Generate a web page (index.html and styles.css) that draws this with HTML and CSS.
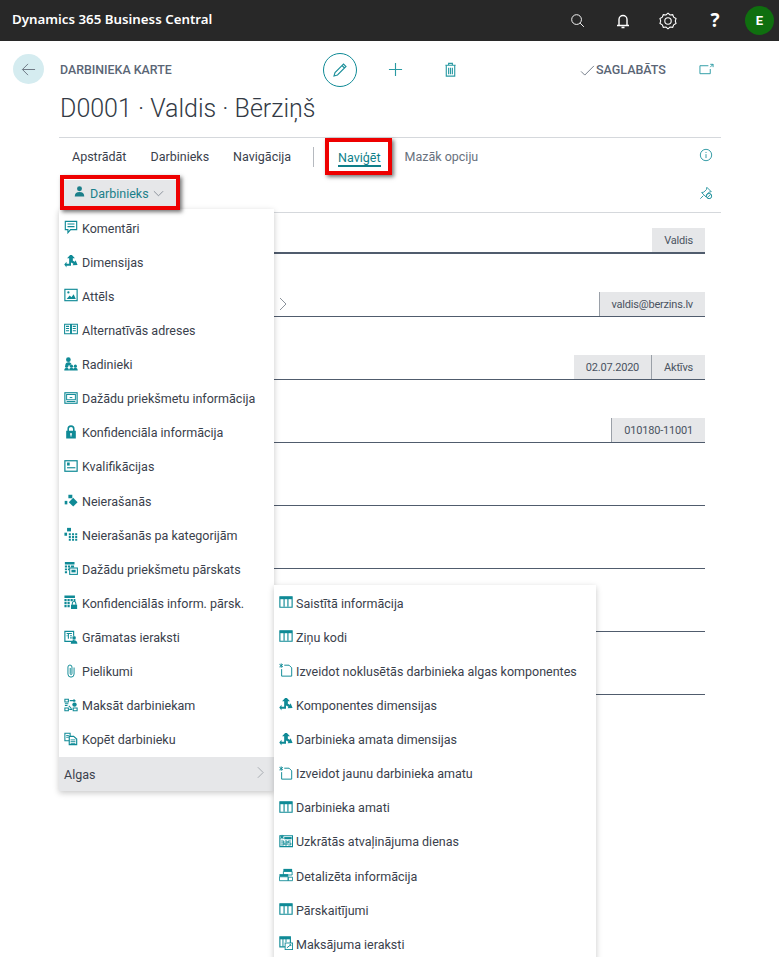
FILE: index.html
```html
<!DOCTYPE html>
<html lang="lv">
<head>
<meta charset="utf-8">
<title>Darbinieka karte</title>
<link rel="stylesheet" href="styles.css">
</head>
<body>
<svg class="sprite" xmlns="http://www.w3.org/2000/svg">
  <defs>
    <symbol id="i-comment" viewBox="0 0 16 16"><path d="M1.500 1.500h13v9.500H7.500l-3 3.500v-3.500h-3z" fill="none" stroke="currentColor" stroke-width="1.300"/><path d="M4 4.600h8M4 7.600h8" stroke="currentColor" stroke-width="1.300"/></symbol>
    <symbol id="i-dim" viewBox="0 0 16 16"><path d="M9 1l3.500 3.800h-2.400v2.800l2.300 1.300.9-1.700 2.200 5.300-5.700.3 1-1.800L8 9.600V13.500H2.800l.1 1.800-2.600-3.300 2.600-3.200v2.300h3V4.800H3.500L7 1z" fill="currentColor"/></symbol>
    <symbol id="i-image" viewBox="0 0 16 16"><rect x="1" y="1.500" width="14" height="13" fill="none" stroke="currentColor" stroke-width="1.300"/><path d="M3 12.500l3.500-4 2 2 2.500-3.500 2.500 5.500z" fill="currentColor"/><circle cx="5" cy="5" r="1.300" fill="currentColor"/></symbol>
    <symbol id="i-address" viewBox="0 0 16 16"><path d="M0.700 2.500h6.800v11H0.700zM8.500 2.500h6.800v11H8.500z" fill="none" stroke="currentColor" stroke-width="1.200"/><path d="M2.300 5h3.500M2.300 7.500h3.500M2.300 10h3.500M10 5h3.500M10 7.500h3.500M10 10h3.500" stroke="currentColor" stroke-width="1.200"/></symbol>
    <symbol id="i-people" viewBox="0 0 16 16"><circle cx="5" cy="3" r="2.700" fill="currentColor"/><path d="M1.500 9.500c0-2.500 1.500-3.500 3.500-3.500 1.500 0 3 .5 3.500 2L6 10z" fill="currentColor"/><circle cx="3" cy="10.500" r="1.800" fill="currentColor"/><circle cx="8.500" cy="10.500" r="1.800" fill="currentColor"/><circle cx="13" cy="10.500" r="1.800" fill="currentColor"/><path d="M0.300 15.500c0-2.400 1-3.300 2.700-3.300s2.700.9 2.700 3.300zM5.800 15.500c0-2.400 1-3.300 2.700-3.300s2.700.9 2.700 3.300zM10.300 15.500c0-2.400 1-3.300 2.700-3.300s2.700.9 2.700 3.300z" fill="currentColor"/></symbol>
    <symbol id="i-box" viewBox="0 0 16 16"><rect x="1" y="2" width="14" height="12" fill="none" stroke="currentColor" stroke-width="1.300"/><rect x="3" y="4" width="10" height="6" fill="none" stroke="currentColor" stroke-width="1.100"/><path d="M6.500 7.500h3M3 12h10" stroke="currentColor" stroke-width="1.100"/></symbol>
    <symbol id="i-lock" viewBox="0 0 16 16"><path d="M4.800 7V4.500a3.200 3.200 0 0 1 6.400 0V7" fill="none" stroke="currentColor" stroke-width="1.800"/><path fill-rule="evenodd" d="M2.500 6.500h11V15.500h-11zM8 9a1.200 1.200 0 0 0-.6 2.200V13h1.200v-1.800A1.200 1.200 0 0 0 8 9z" fill="currentColor"/></symbol>
    <symbol id="i-qual" viewBox="0 0 16 16"><rect x="1" y="2" width="14" height="12" fill="none" stroke="currentColor" stroke-width="1.400"/><rect x="3.500" y="4" width="3" height="3.500" fill="currentColor"/><path d="M3.500 10H13" stroke="currentColor" stroke-width="1.300"/></symbol>
    <symbol id="i-absence" viewBox="0 0 16 16"><path d="M10.500 5.500l5 5-5 5-5-5z" fill="currentColor"/><rect x="5" y="2" width="4.500" height="4" fill="currentColor"/><rect x="0.800" y="9" width="3" height="4" fill="currentColor"/></symbol>
    <symbol id="i-abscat" viewBox="0 0 16 16"><rect x="3.500" y="1" width="4.500" height="4" fill="currentColor"/><rect x="0.500" y="6.500" width="3" height="3.500" fill="currentColor"/><path d="M5.500 7h2.300v2.400H5.500zM9.200 7h2.300v2.400H9.200zM12.800 7h2.300v2.400h-2.300zM5.500 10.200h2.300v2.400H5.500zM9.200 10.200h2.300v2.400H9.200zM12.800 10.200h2.300v2.400h-2.300zM5.500 13.300h2.300v2.400H5.500zM9.200 13.300h2.300v2.400H9.200zM12.800 13.300h2.300v2.400h-2.300z" fill="currentColor"/></symbol>
    <symbol id="i-report" viewBox="0 0 16 16"><path d="M1 1h11v3H1zM1 5.200h2.500v2.200H1zM4.500 5.200H7v2.200H4.500zM8 5.200h3.500v2.200H8zM1 8.500h2.500v2.200H1zM1 11.700h2.500v2.200H1zM4.500 8.500H6v2.200H4.500z" fill="currentColor"/><rect x="6.500" y="8" width="8.800" height="7.300" fill="#fff" stroke="currentColor" stroke-width="1.200"/><rect x="8.500" y="10" width="4.800" height="3" fill="currentColor"/></symbol>
    <symbol id="i-confrep" viewBox="0 0 16 16"><path d="M0.500 0.500h12v3h-12zM0.500 4.500h2.500v2.500H0.500zM4 4.500h2.500v2.500H4zM7.500 4.500H10v2.500H7.500zM11 4.500h2v2.500h-2zM0.500 8h2.500v2.500H0.500zM4 8h2.500v2.500H4zM0.500 11.500h2.500V14H0.500zM4 11.500h2.500V14H4z" fill="currentColor"/><path d="M9.500 11V9.500a2 2 0 0 1 4 0V11" fill="none" stroke="currentColor" stroke-width="1.200"/><rect x="8" y="11" width="7" height="5" fill="currentColor"/></symbol>
    <symbol id="i-ledger" viewBox="0 0 16 16"><path d="M1 1.500h10v11.500H1z" fill="none" stroke="currentColor" stroke-width="1.300"/><path d="M3 4h6M5 4v6M3 6.500h1M7 6.500h2M7 9h2" stroke="currentColor" stroke-width="1.200"/><circle cx="11.500" cy="9" r="2.300" fill="currentColor" stroke="#fff" stroke-width=".5"/><path d="M7.700 15.800c0-2.600 1.500-4 3.800-4s3.800 1.400 3.800 4z" fill="currentColor"/></symbol>
    <symbol id="i-clip" viewBox="0 0 16 16"><path d="M11.500 4.500v7a3.500 3.500 0 0 1-7 0v-8a2.300 2.300 0 0 1 4.600 0v7.500a1 1 0 0 1-2 0V5" fill="none" stroke="currentColor" stroke-width="1.100" stroke-linecap="round"/></symbol>
    <symbol id="i-pay" viewBox="0 0 16 16"><path d="M1 1.500h4v3H1zM1 6.500h4M1 8.500h3M1 11.500h4v3H1zM10.500 11.500h4.500v3h-4.500z" fill="none" stroke="currentColor" stroke-width="1.200"/><circle cx="12" cy="7.500" r="2.500" fill="currentColor"/><path d="M6.500 3h6l-1.500-1.500M12.500 3L11 4.500M5.500 9l3 3M6 13h3.500" fill="none" stroke="currentColor" stroke-width="1.200"/></symbol>
    <symbol id="i-copy" viewBox="0 0 16 16"><path d="M1 1.500h6v8.500H1z" fill="none" stroke="currentColor" stroke-width="1.200"/><path d="M2.500 4h3M2.500 6h3" stroke="currentColor"/><path d="M6 5h5l3.500 3v6.500H6z" fill="#fff" stroke="currentColor" stroke-width="1.300"/><path d="M7.500 9H13M7.500 11H13M7.500 13H13" stroke="currentColor"/></symbol>
    <symbol id="i-table" viewBox="0 0 16 16"><path d="M1 2h14v12H1z" fill="none" stroke="currentColor" stroke-width="1.300"/><path d="M1 2h14v2.800H1z" fill="currentColor"/><path d="M5.800 3v10.500M10.200 3v10.500" stroke="currentColor" stroke-width="1.300"/></symbol>
    <symbol id="i-new" viewBox="0 0 16 16"><path d="M6 2.500h5.500l3 3V15H3V7" fill="none" stroke="currentColor" stroke-width="1.100"/><path d="M2.500 0.500v5M0.500 1.500l4 3M4.500 1.500l-4 3" stroke="currentColor" stroke-width="1.100"/></symbol>
    <symbol id="i-accrue" viewBox="0 0 16 16"><path d="M1 2h14.500v12.500H1z" fill="none" stroke="currentColor" stroke-width="1.300"/><path d="M6 3.500h8.500V6H6z" fill="currentColor"/><path d="M3.500 1v5M1.500 2l4 3M5.500 2l-4 3" stroke="currentColor" stroke-width="1.100"/><path d="M2.500 8h3v4.500h-3M2.500 10.200h3M6.800 8h2.400v4.500H6.800V10.200h2.400M10.500 8h3M10.500 8v2.200h3v2.300h-3" fill="none" stroke="currentColor" stroke-width="1.100"/></symbol>
    <symbol id="i-detail" viewBox="0 0 16 16"><path d="M5 1h10v3H5z" fill="currentColor"/><path d="M5 4h10v4H5z" fill="none" stroke="currentColor"/><path d="M0.500 7h10v3H0.500z" fill="currentColor"/><path d="M0.500 10h10v4.500H0.500z" fill="#fff" stroke="currentColor"/><path d="M10.500 10.500H15.500v4h-5z" fill="none" stroke="currentColor"/></symbol>
    <symbol id="i-entries" viewBox="0 0 16 16"><path d="M1 1h12v11.500H1z" fill="none" stroke="currentColor" stroke-width="1.300"/><path d="M1 1h12v2.800H1z" fill="currentColor"/><path d="M4.500 3v9M8 3v4" stroke="currentColor" stroke-width="1.100"/><rect x="7" y="8" width="8.500" height="7.500" fill="#fff" stroke="currentColor"/><path d="M9 13.500l4.500-3.500M12 10h1.500v1.500" fill="none" stroke="currentColor" stroke-width="1.100"/></symbol>
    <symbol id="i-person" viewBox="0 0 12 12"><circle cx="6" cy="3" r="2.700" fill="currentColor"/><path d="M0.800 11.500c0-3.500 2-5 5.200-5s5.200 1.500 5.200 5z" fill="currentColor"/></symbol>
  </defs>
</svg>

<header class="topbar">
  <div class="brand">Dynamics 365 Business Central</div>
  <div class="top-icons">
    <svg class="top-icon search" viewBox="0 0 16 16"><circle cx="7" cy="7" r="5.200" fill="none" stroke="currentColor" stroke-width="1"/><path d="M10.800 10.800l4 4" stroke="currentColor" stroke-width="1"/></svg>
    <svg class="top-icon bell" viewBox="0 0 16 16"><path d="M4 12V6.500a4 4 0 0 1 8 0V12M2 12.500h12M6.500 14.500h3" fill="none" stroke="currentColor" stroke-width="1.400"/></svg>
    <svg class="top-icon gear" viewBox="0 0 18 18"><path d="M9 1.200l2 1.800 2.700-.3 1 2.500 2.300 1.400-.7 2.400.7 2.400-2.300 1.400-1 2.500-2.700-.3-2 1.800-2-1.800-2.700.3-1-2.500L1 11.400l.7-2.400L1 6.600l2.300-1.400 1-2.500 2.700.3z" fill="none" stroke="currentColor" stroke-width="1.100"/><circle cx="9" cy="9" r="3.200" fill="none" stroke="currentColor" stroke-width="1.100"/></svg>
    <span class="help">?</span>
    <span class="avatar">E</span>
  </div>
</header>

<main class="page">
  <div class="action-row">
    <button class="back" aria-label="Atpakaļ"><svg viewBox="0 0 16 16"><path d="M15 8H1.500M7.500 2L1.500 8l6 6" fill="none" stroke="currentColor" stroke-width="1"/></svg></button>
    <div class="caption">DARBINIEKA KARTE</div>
    <div class="center-actions">
      <span class="edit"><svg viewBox="0 0 16 16"><path d="M2 14l1-3.500L11.500 2 14 4.500 5.500 13zM10 3.500L12.500 6" fill="none" stroke="currentColor" stroke-width="1.100"/></svg></span>
      <svg class="act" viewBox="0 0 16 16"><path d="M8 1v14M1 8h14" stroke="currentColor" stroke-width="1.200"/></svg>
      <svg class="act" viewBox="0 0 16 16"><path d="M2.500 3.500h11M6 3.500V1.500h4v2M3.500 3.500v11.500h9V3.500M6 6v7M8 6v7M10 6v7" fill="none" stroke="currentColor" stroke-width="1.200"/></svg>
    </div>
    <div class="saved"><svg viewBox="0 0 16 12"><path d="M1 7l4 4L15 1" fill="none" stroke="currentColor" stroke-width=".9"/></svg><span>SAGLABĀTS</span></div>
    <svg class="share" viewBox="0 0 16 12"><path d="M10 2.500H1v8.500h11V6M12 1h3v3M15 1l-3 3" fill="none" stroke="currentColor" stroke-width="1"/></svg>
  </div>
  <h1 class="title">D0001 · Valdis · Bērziņš</h1>

  <nav class="tabs">
    <span class="tab">Apstrādāt</span>
    <span class="tab">Darbinieks</span>
    <span class="tab last">Navigācija</span>
    <span class="sep"></span>
    <span class="tab active">Naviģēt</span>
    <span class="tab more">Mazāk opciju</span>
    <svg class="tab-end" viewBox="0 0 16 16"><circle cx="8" cy="8" r="6.500" fill="none" stroke="currentColor" stroke-width="1"/><path d="M8 7v4.500M8 4.500v1.200" stroke="currentColor" stroke-width="1"/></svg>
  </nav>
  <div class="subbar">
    <span class="dropdown"><svg class="person"><use href="#i-person"/></svg>Darbinieks<svg class="chev" viewBox="0 0 12 7"><path d="M1 1l5 5 5-5" fill="none" stroke="currentColor" stroke-width=".8"/></svg></span>
    <svg class="tab-end" viewBox="0 0 16 16"><path d="M9 1.500l5 5-2.500.5-3 3-.5 2.500-5-5L5.500 7l3-3zM1.500 14.500L5 11" fill="none" stroke="currentColor" stroke-width="1"/><circle cx="11.500" cy="11.500" r="3" fill="#fff" stroke="currentColor" stroke-width="1.100"/><path d="M9.500 13.500l4-4" stroke="currentColor"/></svg>
  </div>

  <section class="form">
    <div class="field thick"><span class="chip">Valdis</span></div>
    <div class="field"><span class="stub">n</span><svg class="stub-chev" viewBox="0 0 8 14"><path d="M1 1l6 6-6 6" fill="none" stroke="currentColor" stroke-width=".8"/></svg><span class="chip div">valdis@berzins.lv</span></div>
    <div class="field"><span class="chip">02.07.2020</span><span class="chip div">Aktīvs</span></div>
    <div class="field"><span class="chip div">010180-11001</span></div>
    <div class="field"></div>
    <div class="field"></div>
    <div class="field"></div>
    <div class="field"></div>
  </section>
</main>

<ul class="menu main-menu">
  <li><svg class="ico"><use href="#i-comment"/></svg>Komentāri</li>
  <li><svg class="ico"><use href="#i-dim"/></svg>Dimensijas</li>
  <li><svg class="ico"><use href="#i-image"/></svg>Attēls</li>
  <li><svg class="ico"><use href="#i-address"/></svg>Alternatīvās adreses</li>
  <li><svg class="ico"><use href="#i-people"/></svg>Radinieki</li>
  <li><svg class="ico"><use href="#i-box"/></svg>Dažādu priekšmetu informācija</li>
  <li><svg class="ico"><use href="#i-lock"/></svg>Konfidenciāla informācija</li>
  <li><svg class="ico"><use href="#i-qual"/></svg>Kvalifikācijas</li>
  <li><svg class="ico"><use href="#i-absence"/></svg>Neierašanās</li>
  <li><svg class="ico"><use href="#i-abscat"/></svg>Neierašanās pa kategorijām</li>
  <li><svg class="ico"><use href="#i-report"/></svg>Dažādu priekšmetu pārskats</li>
  <li><svg class="ico"><use href="#i-confrep"/></svg>Konfidenciālās inform. pārsk.</li>
  <li><svg class="ico"><use href="#i-ledger"/></svg>Grāmatas ieraksti</li>
  <li><svg class="ico"><use href="#i-clip"/></svg>Pielikumi</li>
  <li><svg class="ico"><use href="#i-pay"/></svg>Maksāt darbiniekam</li>
  <li><svg class="ico"><use href="#i-copy"/></svg>Kopēt darbinieku</li>
  <li class="open"><span>Algas</span><svg class="sub-chev" viewBox="0 0 8 14"><path d="M1 1l6 6-6 6" fill="none" stroke="currentColor" stroke-width=".8"/></svg></li>
</ul>

<ul class="menu sub-menu">
  <li><svg class="ico"><use href="#i-table"/></svg>Saistītā informācija</li>
  <li><svg class="ico"><use href="#i-table"/></svg>Ziņu kodi</li>
  <li><svg class="ico"><use href="#i-new"/></svg>Izveidot noklusētās darbinieka algas komponentes</li>
  <li><svg class="ico"><use href="#i-dim"/></svg>Komponentes dimensijas</li>
  <li><svg class="ico"><use href="#i-dim"/></svg>Darbinieka amata dimensijas</li>
  <li><svg class="ico"><use href="#i-new"/></svg>Izveidot jaunu darbinieka amatu</li>
  <li><svg class="ico"><use href="#i-table"/></svg>Darbinieka amati</li>
  <li><svg class="ico"><use href="#i-accrue"/></svg>Uzkrātās atvaļinājuma dienas</li>
  <li><svg class="ico"><use href="#i-detail"/></svg>Detalizēta informācija</li>
  <li><svg class="ico"><use href="#i-table"/></svg>Pārskaitījumi</li>
  <li><svg class="ico"><use href="#i-entries"/></svg>Maksājuma ieraksti</li>
</ul>

<div class="redbox box-tab"></div>
<div class="redbox box-drop"></div>
</body>
</html>
```

FILE: styles.css
```css
* { box-sizing: border-box; }
html, body { margin: 0; height: 957px; overflow: hidden; }
body {
  position: relative;
  width: 779px;
  background: #fff;
  color: #3a414c;
  font-family: Roboto, "Noto Sans", sans-serif;
  font-size: 12.500px;
}
.sprite { position: absolute; width: 0; height: 0; }

/* top bar */
.topbar {
  height: 41px;
  background: #282828;
  color: #fff;
  display: flex;
  align-items: center;
  justify-content: space-between;
  padding: 0 5px 3px 12px;
}
.brand { font-family: "Noto Sans", sans-serif; font-size: 13.300px; font-weight: 600; }
.top-icons { display: flex; align-items: center; }
.top-icon { width: 16px; height: 16px; margin-top: 3px; }
.top-icon.search { margin-right: 30px; width: 15px; height: 15px; }
.top-icon.bell { margin-right: 28px; }
.top-icon.gear { width: 18px; height: 18px; margin-right: 31px; }
.help { font-family: "Open Sans", sans-serif; font-size: 19px; font-weight: 700; width: 14px; text-align: center; margin: 2px 23px 0 0; }
.avatar {
  width: 29px; height: 29px; border-radius: 50%;
  background: #0f6f0f; color: #fff; font-weight: 700; font-size: 13px;
  display: flex; align-items: center; justify-content: center;
  margin-top: 3px;
}

/* page head */
.page { padding-left: 60px; width: 721px; position: relative; }
.action-row { height: 56px; display: flex; align-items: center; position: relative; padding-top: 1px; }
.back {
  position: absolute; left: -47px; top: 13px;
  width: 31px; height: 30px; border-radius: 50%;
  border: 0; padding: 0; background: #d5ecf0; color: #6a7380;
  display: flex; align-items: center; justify-content: center;
}
.back svg { width: 15px; height: 15px; }
.caption { width: 263px; font-size: 12.400px; font-weight: 500; color: #5a6575; }
.center-actions { display: flex; align-items: center; color: #2a9aa3; width: 257px; }
.edit {
  width: 34px; height: 34px; border-radius: 50%; border: 1px solid #0f8a96;
  display: flex; align-items: center; justify-content: center; margin-right: 31px; color: #1b8f9a;
}
.edit svg { width: 16px; height: 16px; }
.act { width: 15px; height: 15px; margin-right: 40px; }
.saved { display: flex; align-items: center; color: #5a6575; font-size: 12.500px; font-weight: 500; width: 119px; }
.saved svg { width: 15px; height: 11px; margin: 2px 1px 0 0; }
.share { width: 15px; height: 12px; color: #2a9aa3; margin-top: -2px; }
.title {
  margin: 0; height: 40px; font-size: 25px; line-height: 24px; font-weight: 300; color: #333a45;
}

/* tabs */
.tabs {
  margin-left: -1px;
  height: 38px;
  border-top: 1px solid #d5d8dc;
  display: flex;
  align-items: center;
  padding-left: 13px;
  position: relative;
}
.tab { margin-right: 24px; white-space: nowrap; }
.tab.last { margin-right: 22px; }
.sep { width: 1px; height: 20px; background: #b5b9bf; margin: 0 24px 0 0; }
.tab.active { color: #0f7f8a; border-bottom: 2px solid #0f7f8a; line-height: 15px; margin-top: 3px; }
.tab.more { color: #68717d; }
.tab-end { position: absolute; right: 8px; width: 14px; height: 14px; color: #1b8f9a; }
.tabs .tab-end { top: 10px; }
.subbar {
  margin-left: -1px;
  height: 38px;
  border-bottom: 1px solid #d5d8dc;
  position: relative;
  display: flex;
  align-items: center;
}
.subbar .tab-end { top: 11px; }
.dropdown {
  display: flex; align-items: center;
  height: 27px; width: 112px; margin-left: 5px; margin-top: -1px; padding-left: 10px;
  background: #e6e7e9; color: #1b7f8a;
}
.person { width: 11px; height: 11px; margin-right: 5px; margin-top: -3px; }
.chev { width: 11px; height: 7px; margin-left: 4px; color: #6d7682; }

/* form rows behind the menus */
.field {
  height: 63px;
  width: 645px;
  border-bottom: 1px solid #505c6d;
  display: flex;
  justify-content: flex-end;
  align-items: flex-end;
  position: relative;
}
.field.thick { height: 41px; border-bottom-width: 2px; }
.chip {
  height: 24px;
  padding: 0 12px;
  background: #e6e7e9;
  color: #4a5361;
  font-size: 11px;
  letter-spacing: -.2px;
  display: flex;
  align-items: center;
}
.chip.div { border-left: 1px solid #9aa0a8; }
.stub { position: absolute; left: 207px; bottom: 4px; }
.stub-chev { position: absolute; left: 219px; bottom: 5px; width: 8px; height: 14px; color: #6d7682; }

/* menus */
.menu {
  position: absolute;
  margin: 0;
  padding: 2px 0 0;
  list-style: none;
  background: #fff;
  box-shadow: 0 2px 6px rgba(0, 0, 0, .22);
}
.main-menu { left: 59px; top: 209px; width: 215px; }
.sub-menu { left: 274px; top: 585px; width: 322px; height: 400px; padding-top: 1px; }
.menu li {
  height: 34.130px;
  display: flex;
  align-items: center;
  padding-left: 5px;
  color: #3a414c;
  white-space: nowrap;
}
.ico { width: 14px; height: 14px; margin-right: 4px; color: #0f8a96; flex: none; margin-top: -2px; }
.sub-menu .ico { margin-right: 3px; }
.menu li.open { background: #e6e7e9; justify-content: space-between; padding-right: 10px; }
.sub-chev { width: 7px; height: 13px; color: #8d939b; margin-top: -4px; }

/* red annotation frames */
.redbox {
  position: absolute;
  border: 4px solid #ee0000;
  box-shadow: 2px 2px 4px rgba(0, 0, 0, .55);
}
.box-tab { left: 325px; top: 138px; width: 67px; height: 37px; }
.box-drop { left: 60px; top: 175px; width: 120px; height: 35px; }
```
